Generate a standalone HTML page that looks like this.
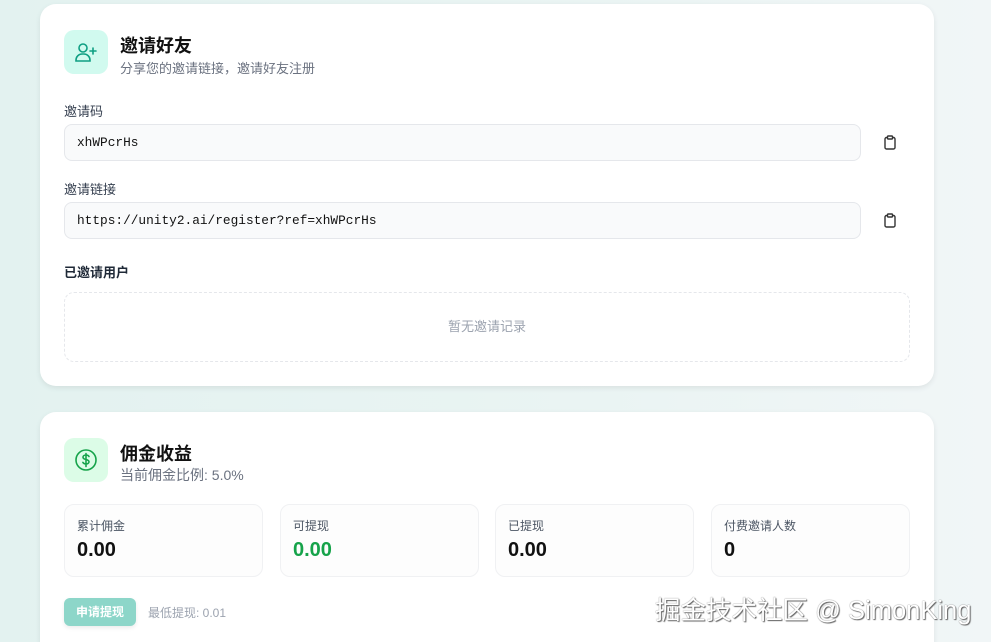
<!DOCTYPE html>
<html style="width:991px;height:642px;overflow:hidden"><head><meta charset="utf-8"><style>
*{box-sizing:border-box;margin:0;padding:0}
body{width:991px;height:642px;overflow:hidden;background:linear-gradient(90deg,#e3f2f0 0%,#eaf4f3 60%,#f1f6f7 100%);font-family:"Liberation Sans","Noto Sans CJK SC",sans-serif;position:relative;color:#111827}
.card{position:absolute;left:40px;width:894px;background:#fff;border-radius:16px;box-shadow:0 2px 6px rgba(0,0,0,0.08)}
.abs{position:absolute}
.ib{position:absolute;left:24px;width:44px;height:44px;border-radius:10px;display:flex;align-items:center;justify-content:center}
.t{font-size:18px;font-weight:bold;color:#111}
.s{font-size:13px;color:#6b7280}
.lbl{font-size:13px;color:#374151}
.inp{position:absolute;left:24px;width:797px;height:37px;background:#f9fafb;border:1px solid #e5e7eb;border-radius:8px;font-family:"Liberation Mono",monospace;font-size:12.8px;padding:0 12px;line-height:35px;color:#111}
.stat{position:absolute;top:92px;width:199px;height:73px;border:1px solid #f0f1f3;border-radius:10px;background:#fdfdfd}
.stat .l{position:absolute;left:12px;top:12px;font-size:12px;color:#4b5563}
.stat .v{position:absolute;left:12px;top:34px;font-size:20px;font-weight:bold;color:#111}
</style></head><body>
<div class="card" style="top:4px;height:382px">
 <div class="ib" style="top:26px;background:#d1faef">
  <svg width="24" height="24" viewBox="0 0 24 24" fill="none" stroke="#0f9f83" stroke-width="1.6" stroke-linecap="round"><circle cx="9" cy="8" r="4"/><path d="M2 21v-1a6 6 0 0 1 6-6h2a6 6 0 0 1 6 6v1z"/><path d="M19 8v6M16 11h6"/></svg>
 </div>
 <div class="abs t" style="left:80px;top:28px">邀请好友</div>
 <div class="abs s" style="left:80px;top:54px">分享您的邀请链接，邀请好友注册</div>
 <div class="abs lbl" style="left:24px;top:97px">邀请码</div>
 <div class="inp" style="top:120px">xhWPcrHs</div>
 <svg class="abs" style="left:843px;top:131px" width="14" height="15" viewBox="0 0 14 15" fill="none" stroke="#333" stroke-width="1.4"><rect x="2" y="2.5" width="10" height="11.5" rx="1.5"/><rect x="4.5" y="1" width="5" height="3" rx="0.8" fill="#fff"/></svg>
 <div class="abs lbl" style="left:24px;top:175px">邀请链接</div>
 <div class="inp" style="top:198px">https://unity2.ai/register?ref=xhWPcrHs</div>
 <svg class="abs" style="left:843px;top:209px" width="14" height="15" viewBox="0 0 14 15" fill="none" stroke="#333" stroke-width="1.4"><rect x="2" y="2.5" width="10" height="11.5" rx="1.5"/><rect x="4.5" y="1" width="5" height="3" rx="0.8" fill="#fff"/></svg>
 <div class="abs" style="left:24px;top:258px;font-size:13px;font-weight:bold;color:#1f2937">已邀请用户</div>
 <div class="abs" style="left:24px;top:288px;width:846px;height:70px;border:1px dashed #e5e7eb;border-radius:10px;text-align:center;line-height:68px;font-size:13px;color:#9ca3af">暂无邀请记录</div>
</div>
<div class="card" style="top:412px;height:260px">
 <div class="ib" style="top:26px;background:#dcfce7">
  <svg width="24" height="24" viewBox="0 0 24 24" fill="none" stroke="#16a34a" stroke-width="1.6" stroke-linecap="round"><circle cx="12" cy="12" r="10"/><path d="M15 8.5c-.5-1-1.6-1.5-3-1.5-1.8 0-3 .9-3 2.2 0 3 6 1.6 6 4.6 0 1.3-1.3 2.2-3 2.2-1.5 0-2.6-.6-3.1-1.6M12 5.5v13"/></svg>
 </div>
 <div class="abs t" style="left:80px;top:28px">佣金收益</div>
 <div class="abs" style="left:80px;top:53px;font-size:14px;color:#6b7280">当前佣金比例: 5.0%</div>
 <div class="stat" style="left:24px"><div class="l">累计佣金</div><div class="v">0.00</div></div>
 <div class="stat" style="left:240px"><div class="l">可提现</div><div class="v" style="color:#16a34a">0.00</div></div>
 <div class="stat" style="left:455px"><div class="l">已提现</div><div class="v">0.00</div></div>
 <div class="stat" style="left:671px"><div class="l">付费邀请人数</div><div class="v">0</div></div>
 <div class="abs" style="left:24px;top:186px;width:72px;height:28px;background:#8dd6c9;border-radius:6px;color:#fff;font-size:12px;font-weight:bold;text-align:center;line-height:28px;box-shadow:0 2px 4px rgba(0,0,0,0.08)">申请提现</div>
 <div class="abs" style="left:108px;top:192px;font-size:12px;color:#9ca3af">最低提现: 0.01</div>
</div>
<div class="abs" style="left:655px;top:590px;font-size:25.5px;white-space:nowrap;color:#fff;text-shadow:0 0 1px #555,1px 1px 1px #666">掘金技术社区 @ SimonKing</div>
</body></html>
